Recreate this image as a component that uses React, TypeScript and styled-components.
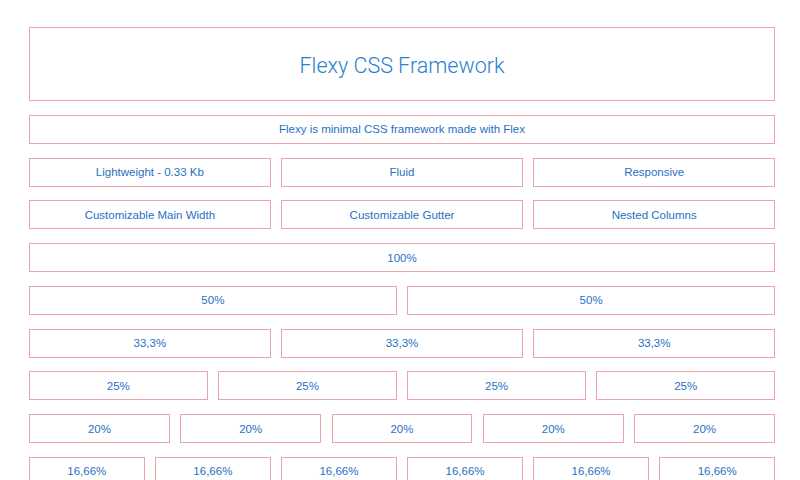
import React from "react";
import styled, { createGlobalStyle } from "styled-components";

const Global = createGlobalStyle`
  html, body { margin: 0; padding: 0; background: #ffffff; }
  body { font-family: "Liberation Sans", Arial, sans-serif; }
`;

const Container = styled.div`
  width: 746px;
  margin: 0 0 0 29px;
  padding-top: 27px;
  display: flex;
  flex-direction: column;
  gap: 13.75px;
`;

const Row = styled.div`
  display: flex;
  gap: 10.5px;
`;

const Cell = styled.div<{ $tall?: boolean }>`
  flex: 1 1 0;
  min-width: 0;
  box-sizing: border-box;
  height: ${(p) => (p.$tall ? "74px" : "29px")};
  border: 1px solid #eea3aa;
  display: flex;
  align-items: center;
  justify-content: center;
  color: #1f71c4;
  font-size: 11.5px;
  white-space: nowrap;
`;

const Title = styled.h1`
  margin: 0;
  font-family: Roboto, "Liberation Sans", sans-serif;
  font-weight: 300;
  font-size: 21.5px;
  color: #2b7fd2;
  padding-top: 2px;
`;

const rows: string[][] = [
  ["Flexy is minimal CSS framework made with Flex"],
  ["Lightweight - 0.33 Kb", "Fluid", "Responsive"],
  ["Customizable Main Width", "Customizable Gutter", "Nested Columns"],
  ["100%"],
  ["50%", "50%"],
  ["33,3%", "33,3%", "33,3%"],
  ["25%", "25%", "25%", "25%"],
  ["20%", "20%", "20%", "20%", "20%"],
  ["16,66%", "16,66%", "16,66%", "16,66%", "16,66%", "16,66%"],
];

export default function App() {
  return (
    <>
      <Global />
      <Container>
        <Row>
          <Cell $tall>
            <Title>Flexy CSS Framework</Title>
          </Cell>
        </Row>
        {rows.map((r, i) => (
          <Row key={i}>
            {r.map((t, j) => (
              <Cell key={j}>{t}</Cell>
            ))}
          </Row>
        ))}
      </Container>
    </>
  );
}
